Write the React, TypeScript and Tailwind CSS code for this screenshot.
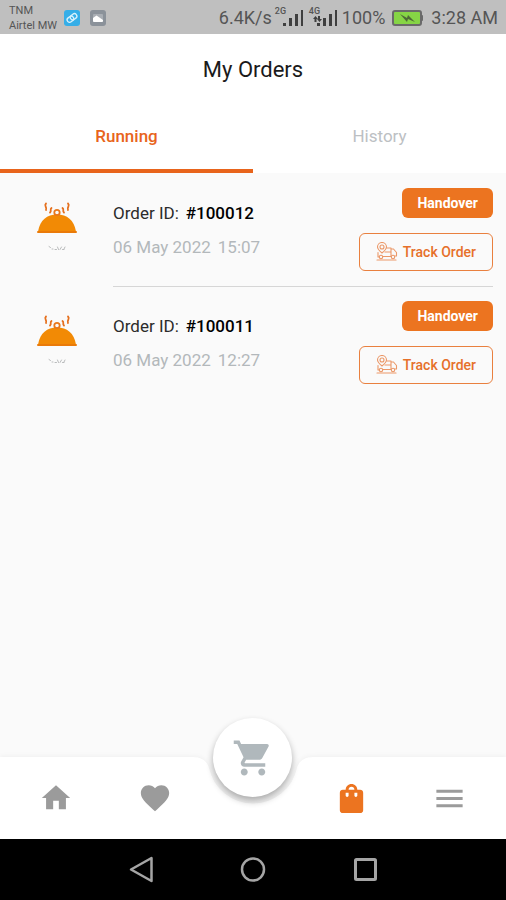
import {
  MdFavorite,
  MdHome,
  MdMenu,
  MdShoppingBag,
  MdShoppingCart,
} from "react-icons/md";

type Order = { id: string; date: string; time: string; status: string };

const orders: Order[] = [
  { id: "#100012", date: "06 May 2022", time: "15:07", status: "Handover" },
  { id: "#100011", date: "06 May 2022", time: "12:27", status: "Handover" },
];

function SignalBars() {
  return (
    <svg width="21" height="18" viewBox="0 0 21 18" fill="#3f3f3f" aria-hidden="true">
      <rect x="0" y="14" width="3" height="3" />
      <rect x="6" y="9" width="3" height="8" />
      <rect x="12" y="5" width="3" height="12" />
      <rect x="18" y="1" width="2" height="16" />
    </svg>
  );
}

function Signal({ label, roaming }: { label: string; roaming?: boolean }) {
  return (
    <span className="relative block">
      <SignalBars />
      <span className="absolute -top-1 -left-2 text-[9px] leading-3 font-medium">{label}</span>
      {roaming && (
        <svg className="absolute top-[7px] -left-1" width="9" height="6" viewBox="0 0 9 6" fill="#3f3f3f" aria-hidden="true">
          <path d="M2.5 0 5 3H3.500v3h-2V3H0zM5 0h2v3h2L6.500 6 4 3h1z" />
        </svg>
      )}
    </span>
  );
}

function StatusBar() {
  return (
    <div className="flex h-[34px] items-center justify-between bg-[#bfbfbf] pt-px pr-2 pl-[9px] text-[#555]">
      <div className="flex items-center gap-[7px]">
        <div className="text-[11px] leading-[15px]">
          <div>TNM</div>
          <div>Airtel MW</div>
        </div>
        <svg width="16" height="16" viewBox="0 0 16 16" fill="none" aria-hidden="true">
          <rect width="16" height="16" rx="3" fill="#35aee8" />
          <g transform="rotate(-38 8 8)" stroke="#d8f1fc" strokeWidth="1.300">
            <rect x="2.500" y="5.500" width="7" height="5" rx="2.500" />
            <rect x="6.500" y="5.500" width="7" height="5" rx="2.500" />
          </g>
        </svg>
        <svg className="ml-[3px]" width="16" height="16" viewBox="0 0 16 16" aria-hidden="true">
          <rect width="16" height="16" rx="3" fill="#8b929a" />
          <rect x="3" y="4" width="10" height="8" rx="1" fill="#a9aeb4" />
          <path d="M3 8l3.500-2.500L13 10v1a1 1 0 0 1-1 1H4a1 1 0 0 1-1-1z" fill="#fff" />
        </svg>
      </div>
      <div className="flex items-center text-lg leading-6">
        <span>6.4K/s</span>
        <span className="ml-[11px]">
          <Signal label="2G" />
        </span>
        <span className="ml-[13px]">
          <Signal label="4G" roaming />
        </span>
        <span className="ml-1">100%</span>
        <svg className="ml-[7px]" width="32" height="16" viewBox="0 0 32 16" aria-hidden="true">
          <rect x="1" y="1" width="28" height="14" rx="2" fill="#86d545" stroke="#6a6a6a" strokeWidth="2" />
          <rect x="29" y="5" width="2" height="6" rx="1" fill="#6a6a6a" />
          <path d="M8 4l7 4 1-3 7 7-7-3-1 3z" fill="#4d6a37" />
        </svg>
        <span className="ml-[7px]">3:28 AM</span>
      </div>
    </div>
  );
}

function CloudDish() {
  return (
    <svg width="40" height="50" viewBox="0 0 40 50" fill="none" aria-hidden="true">
      <path d="M1 29.500C3 18 10 12.500 20 12.500S37 18 39 29.500z" fill="#f28a05" />
      <rect x="0" y="29" width="40" height="2" rx="1" fill="#ea7a08" />
      <circle cx="20" cy="10.500" r="2.700" stroke="#e9781c" strokeWidth="1.800" />
      <g stroke="#e5701e" strokeWidth="1.800" strokeLinecap="round">
        <path d="M9 1.500c-2.500 2.500 1.500 3.500 0 6.500M14.500 6c-2 1.500.5 2.500-1.500 4.500" />
        <path d="M31 1.500c2.500 2.500-1.500 3.500 0 6.500M25.500 6c2 1.500-.5 2.500 1.500 4.500" />
      </g>
      <g stroke="#b9bbbc" strokeLinecap="round">
        <path d="M12 44.500l1.500 1M15 47h1M18 47.500h1.500M20.500 45l1 2.500M23 47.500l1.500-2.500M25.500 47.500h1.500M28 45l-1 2" />
      </g>
    </svg>
  );
}

function TrackingIcon() {
  return (
    <svg width="22" height="20" viewBox="0 0 22 20" fill="none" stroke="#eb9868" strokeWidth="1.100" strokeLinecap="round" strokeLinejoin="round" aria-hidden="true">
      <path d="M6 11C3 8.500 1.500 7 1.500 5a4.500 4.500 0 0 1 9 0C10.500 7 9 8.500 6 11z" />
      <circle cx="6" cy="5" r="2" />
      <path d="M11 6h4v8M15 7h2.500L20.500 10.500V14H19M2 10.500V15h1.500M7 14.500h8M9 10h6" />
      <circle cx="5" cy="15" r="1.700" />
      <circle cx="17" cy="15" r="1.700" />
      <path d="M1 18h19" />
    </svg>
  );
}

function OrderRow({ order, last }: { order: Order; last: boolean }) {
  return (
    <li className="flex">
      <div className="flex w-[113px] shrink-0 justify-center pt-7">
        <CloudDish />
      </div>
      <div
        className={`flex min-w-0 flex-1 justify-between border-b pt-3.5 pb-[15px] ${
          last ? "border-transparent" : "border-[#d6d6d6]"
        }`}
      >
        <div className="flex flex-col gap-2.5 pt-[13px] text-[17px] leading-6">
          <div className="flex gap-[7px] text-[#2b2b2b]">
            <span>Order ID:</span>
            <span className="font-medium text-black">{order.id}</span>
          </div>
          <div className="flex gap-[7px] text-[#b3b8bb]">
            <span>{order.date}</span>
            <span>{order.time}</span>
          </div>
        </div>
        <div className="flex flex-col items-end gap-[15px]">
          <span className="flex h-[30px] items-center rounded-md bg-[#ec7420] px-[15px] text-sm font-bold text-white">
            {order.status}
          </span>
          <button
            type="button"
            className="flex h-[38px] items-center gap-[5px] rounded-md border border-[#e9803f] px-4 text-sm font-medium text-[#e6702a]"
          >
            <TrackingIcon />
            Track Order
          </button>
        </div>
      </div>
    </li>
  );
}

function BottomBar() {
  return (
    <nav className="relative h-[82px]" aria-label="Main">
      <div className="absolute inset-0 flex drop-shadow-[0_-1px_2px_rgba(0,0,0,0.04)]">
        <div className="flex-1 bg-white" />
        <svg width="130" height="82" viewBox="0 0 130 82" aria-hidden="true">
          <path d="M0 0H4C12 0 19 3 21 11A45 45 0 0 0 109 11C111 3 118 0 126 0H130V82H0z" fill="#fff" />
        </svg>
        <div className="flex-1 bg-white" />
      </div>
      <div className="relative grid h-full grid-cols-5 px-[7px] text-[#9b9b9b]">
        <button type="button" aria-label="Home" className="flex items-center justify-center">
          <MdHome size={34} />
        </button>
        <button type="button" aria-label="Favourites" className="flex items-center justify-center">
          <MdFavorite size={34} />
        </button>
        <div className="flex items-start justify-center">
          <button
            type="button"
            aria-label="Cart"
            className="-mt-[39px] flex size-[79px] shrink-0 items-center justify-center rounded-full bg-white text-[#b0b8bc] shadow-[0_4px_7px_rgba(0,0,0,0.32)]"
          >
            <MdShoppingCart size={42} />
          </button>
        </div>
        <button type="button" aria-label="Orders" className="flex items-center justify-center text-[#ec7420]">
          <MdShoppingBag size={35} />
        </button>
        <button type="button" aria-label="Menu" className="flex items-center justify-center">
          <MdMenu size={35} />
        </button>
      </div>
    </nav>
  );
}

function SystemBar() {
  return (
    <div className="flex h-[61px] items-center justify-center gap-[84px] bg-black">
      <button type="button" aria-label="Back">
        <svg width="28" height="28" viewBox="0 0 28 28" fill="none" stroke="#a5a5a5" strokeWidth="2.500" strokeLinejoin="round" aria-hidden="true">
          <path d="M24.500 2v23L4 13.500z" />
        </svg>
      </button>
      <button type="button" aria-label="Home screen">
        <svg width="28" height="28" viewBox="0 0 28 28" fill="none" stroke="#a5a5a5" strokeWidth="2.500" aria-hidden="true">
          <circle cx="14" cy="13.500" r="11" />
        </svg>
      </button>
      <button type="button" aria-label="Recent apps">
        <svg width="28" height="28" viewBox="0 0 28 28" fill="none" stroke="#a5a5a5" strokeWidth="3" aria-hidden="true">
          <rect x="4.500" y="3.500" width="20" height="20" rx="1" />
        </svg>
      </button>
    </div>
  );
}

export default function App() {
  return (
    <div className="flex min-h-screen flex-col bg-[#fafafa] font-['Roboto',sans-serif]">
      <StatusBar />
      <header className="flex h-[70px] items-center justify-center bg-white pt-0.5">
        <h1 className="text-[22px] leading-7 text-[#1a1a1a]">My Orders</h1>
      </header>
      <div role="tablist" className="grid h-[69px] grid-cols-2 bg-white text-[17px]">
        <button type="button" role="tab" aria-selected="true" className="border-b-4 border-[#e8641b] font-medium text-[#e8641b]">
          Running
        </button>
        <button type="button" role="tab" aria-selected="false" className="border-b-4 border-transparent text-[#bcc0c3]">
          History
        </button>
      </div>
      <main className="flex-1 pt-px">
        <ul className="pr-[13px]">
          {orders.map((order, i) => (
            <OrderRow key={order.id} order={order} last={i === orders.length - 1} />
          ))}
        </ul>
      </main>
      <BottomBar />
      <SystemBar />
    </div>
  );
}
